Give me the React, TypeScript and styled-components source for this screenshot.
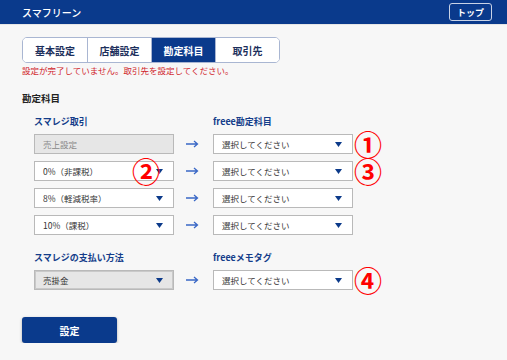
import React from 'react';
import styled, { createGlobalStyle } from 'styled-components';

const GlobalStyle = createGlobalStyle`
  html, body {
    margin: 0;
    padding: 0;
    background: #f7f7f7;
    font-family: 'Noto Sans CJK JP', 'Noto Sans', sans-serif;
  }
`;

const tabs = ['基本設定', '店舗設定', '勘定科目', '取引先'];

const rows = [
  { label: '売上設定', disabled: true, note: '①' },
  { label: '0%（非課税）', note: '③', inner: '②' },
  { label: '8%（軽減税率）' },
  { label: '10%（課税）' }
];

const Caret = () => (
  <svg width="7" height="5" viewBox="0 0 7 5">
    <path d="M0 0 H7 L3.5 5 Z" fill="#0c3a8a" />
  </svg>
);

const Arrow = () => (
  <svg width="14" height="8" viewBox="0 0 14 8">
    <path d="M1 4 H12 M9 1 L12.5 4 L9 7" stroke="#3a68c6" strokeWidth="1.3" fill="none" />
  </svg>
);

const App = () => {
  return (
    <>
      <GlobalStyle />
      <Header>
        <Title>スマフリーン</Title>
        <TopButton>トップ</TopButton>
      </Header>
      <Main>
        <Tabs>
          {tabs.map((t, i) => (
            <Tab key={t} active={i === 2}>{t}</Tab>
          ))}
        </Tabs>
        <ErrorText>設定が完了していません。取引先を設定してください。</ErrorText>
        <SectionTitle>勘定科目</SectionTitle>
        <Form>
          <Label>スマレジ取引</Label>
          <span />
          <Label>freee勘定科目</Label>
          {rows.map((r) => (
            <React.Fragment key={r.label}>
              <SelectBox disabled={!!r.disabled}>
                <span>{r.label}</span>
                {!r.disabled && <Caret />}
                {r.inner && <Note $left={97}>{r.inner}</Note>}
              </SelectBox>
              <ArrowCell><Arrow /></ArrowCell>
              <SelectBox>
                <span>選択してください</span>
                <Caret />
                {r.note && <Note $left={140}>{r.note}</Note>}
              </SelectBox>
            </React.Fragment>
          ))}
          <Label $top={10}>スマレジの支払い方法</Label>
          <span />
          <Label $top={10}>freeeメモタグ</Label>
          <SelectBox disabled shaded>
            <span>売掛金</span>
            <Caret />
          </SelectBox>
          <ArrowCell><Arrow /></ArrowCell>
          <SelectBox>
            <span>選択してください</span>
            <Caret />
            <Note $left={140}>④</Note>
          </SelectBox>
        </Form>
        <SubmitButton>設定</SubmitButton>
      </Main>
    </>
  );
};

const Header = styled.header`
  box-sizing: border-box;
  height: 25px;
  background: #0a3a8c;
  display: flex;
  align-items: center;
  justify-content: space-between;
  padding: 0 15px 0 22px;
  border-bottom: 1px solid #e6e6e6;
`;

const Title = styled.div`
  color: #fff;
  font-size: 10px;
  font-weight: 500;
`;

const TopButton = styled.div`
  width: 41px;
  height: 16px;
  border: 1px solid #c9d3e6;
  border-radius: 3px;
  color: #fff;
  font-size: 9px;
  font-weight: 700;
  display: flex;
  align-items: center;
  justify-content: center;
`;

const Main = styled.main`
  padding: 12px 22px 0;
`;

const Tabs = styled.div`
  display: grid;
  width: max-content;
  grid-template-columns: repeat(4, 64px);
  height: 24px;
  border: 1px solid #a9b6d2;
  border-radius: 5px;
  overflow: hidden;
  background: #fff;
`;

const Tab = styled.div<{ active?: boolean }>`
  display: flex;
  align-items: center;
  justify-content: center;
  font-size: 10px;
  font-weight: 700;
  color: ${(p) => (p.active ? '#fff' : '#1c2f5c')};
  background: ${(p) => (p.active ? '#0a3a8c' : '#fff')};
  & + & {
    border-left: 1px solid #a9b6d2;
  }
`;

const ErrorText = styled.div`
  color: #d0232a;
  font-size: 8.5px;
  line-height: 12px;
  margin-top: 1px;
`;

const SectionTitle = styled.div`
  font-size: 9.5px;
  font-weight: 700;
  color: #222;
  margin-top: 15px;
`;

const Form = styled.div`
  display: grid;
  grid-template-columns: 140px 39px 140px;
  row-gap: 7px;
  padding-left: 12px;
  margin-top: 11px;
  align-items: center;
`;

const Label = styled.div<{ $top?: number }>`
  font-size: 9px;
  font-weight: 700;
  color: #143d8a;
  line-height: 11px;
  margin-top: ${(p) => p.$top ?? 0}px;
`;

const SelectBox = styled.div<{ disabled?: boolean; shaded?: boolean }>`
  position: relative;
  box-sizing: border-box;
  height: 20px;
  border: 1px solid #b9b9b9;
  background: ${(p) => (p.disabled ? '#e6e6e6' : '#fff')};
  box-shadow: ${(p) => (p.shaded ? 'inset 0 0 0 1px #c9c9c9' : 'none')};
  display: flex;
  align-items: center;
  justify-content: space-between;
  padding: 0 10px 0 8px;
  font-size: 8.5px;
  color: ${(p) => (p.disabled && !p.shaded ? '#888' : '#333')};
`;

const ArrowCell = styled.div`
  display: flex;
  justify-content: center;
  padding-right: 4px;
`;

const Note = styled.span<{ $left: number }>`
  position: absolute;
  left: ${(p) => p.$left}px;
  top: -3px;
  font-size: 28px;
  line-height: 24px;
  font-weight: 700;
  color: #ff0000;
`;

const SubmitButton = styled.button`
  display: block;
  margin-top: 27px;
  width: 95px;
  height: 26px;
  border: none;
  border-radius: 3px;
  background: #0a3a8c;
  color: #fff;
  font-family: inherit;
  font-size: 10px;
  font-weight: 700;
  box-shadow: 0 1px 3px rgba(0, 0, 0, 0.3);
`;

export default App;
